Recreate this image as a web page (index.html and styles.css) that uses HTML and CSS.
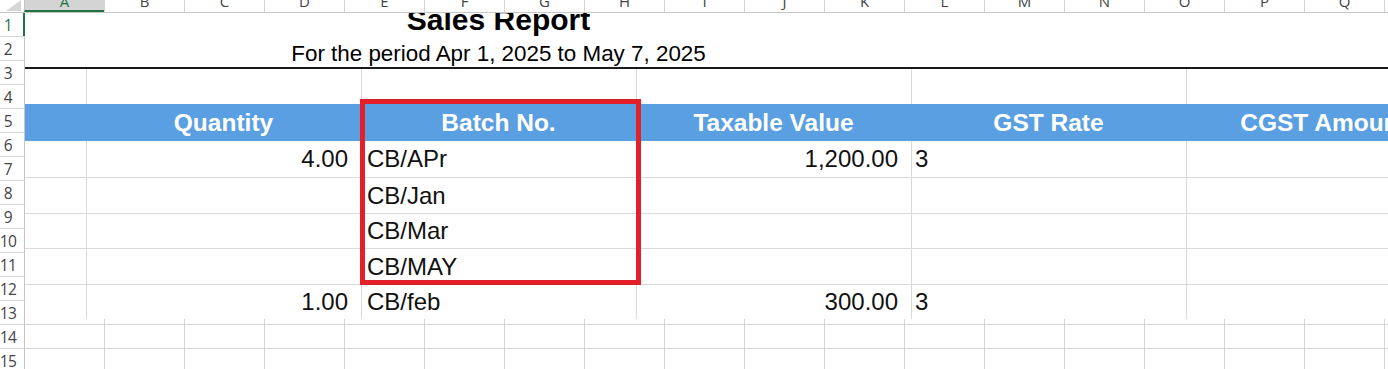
FILE: index.html
```html
<!DOCTYPE html>
<html>
<head>
<meta charset="utf-8">
<link rel="stylesheet" href="styles.css">
</head>
<body>
<div class="sheet">
  <div class="colhead">
    <div class="corner"><svg width="24" height="12" viewBox="0 0 24 12"><polygon points="6,11 21,11 21,0" fill="#d6d6d6"/></svg></div>
    <div class="col sel"><span>A</span></div>
    <div class="col"><span>B</span></div>
    <div class="col"><span>C</span></div>
    <div class="col"><span>D</span></div>
    <div class="col"><span>E</span></div>
    <div class="col"><span>F</span></div>
    <div class="col"><span>G</span></div>
    <div class="col"><span>H</span></div>
    <div class="col"><span>I</span></div>
    <div class="col"><span>J</span></div>
    <div class="col"><span>K</span></div>
    <div class="col"><span>L</span></div>
    <div class="col"><span>M</span></div>
    <div class="col"><span>N</span></div>
    <div class="col"><span>O</span></div>
    <div class="col"><span>P</span></div>
    <div class="col"><span>Q</span></div>
    <div class="col"><span>R</span></div>
  </div>
  <div class="body">
    <div class="rowhead">
      <div class="rn sel">1</div>
      <div class="rn">2</div>
      <div class="rn">3</div>
      <div class="rn">4</div>
      <div class="rn">5</div>
      <div class="rn">6</div>
      <div class="rn">7</div>
      <div class="rn">8</div>
      <div class="rn">9</div>
      <div class="rn">10</div>
      <div class="rn">11</div>
      <div class="rn">12</div>
      <div class="rn">13</div>
      <div class="rn">14</div>
      <div class="rn">15</div>
    </div>
    <div class="main">
      <div class="report">
        <div class="titles">
          <div class="tbox">
            <div class="title">Sales Report</div>
            <div class="subtitle">For the period Apr 1, 2025 to May 7, 2025</div>
          </div>
        </div>
        <div class="row gap">
          <div></div><div></div><div></div><div></div><div></div><div></div>
        </div>
        <div class="row band">
          <div></div>
          <div class="h">Quantity</div>
          <div class="h">Batch No.</div>
          <div class="h">Taxable Value</div>
          <div class="h">GST Rate</div>
          <div class="h">CGST Amount</div>
        </div>
        <div class="row data first">
          <div></div>
          <div class="num">4.00</div>
          <div class="txt">CB/APr</div>
          <div class="num">1,200.00</div>
          <div class="txt rate">3</div>
          <div></div>
        </div>
        <div class="row data">
          <div></div>
          <div class="num"></div>
          <div class="txt">CB/Jan</div>
          <div class="num"></div>
          <div class="txt rate"></div>
          <div></div>
        </div>
        <div class="row data short">
          <div></div>
          <div class="num"></div>
          <div class="txt">CB/Mar</div>
          <div class="num"></div>
          <div class="txt rate"></div>
          <div></div>
        </div>
        <div class="row data">
          <div></div>
          <div class="num"></div>
          <div class="txt">CB/MAY</div>
          <div class="num"></div>
          <div class="txt rate"></div>
          <div></div>
        </div>
        <div class="row data short">
          <div></div>
          <div class="num">1.00</div>
          <div class="txt">CB/feb</div>
          <div class="num">300.00</div>
          <div class="txt rate">3</div>
          <div></div>
        </div>
        <div class="redbox"></div>
      </div>
      <div class="grid">
        <div class="gstrip">
          <div class="gc"></div><div class="gc"></div><div class="gc"></div><div class="gc"></div><div class="gc"></div><div class="gc"></div><div class="gc"></div><div class="gc"></div><div class="gc"></div><div class="gc"></div><div class="gc"></div><div class="gc"></div><div class="gc"></div><div class="gc"></div><div class="gc"></div><div class="gc"></div><div class="gc"></div><div class="gc"></div>
        </div>
        <div class="grow">
          <div class="gc"></div><div class="gc"></div><div class="gc"></div><div class="gc"></div><div class="gc"></div><div class="gc"></div><div class="gc"></div><div class="gc"></div><div class="gc"></div><div class="gc"></div><div class="gc"></div><div class="gc"></div><div class="gc"></div><div class="gc"></div><div class="gc"></div><div class="gc"></div><div class="gc"></div><div class="gc"></div>
        </div>
        <div class="grow">
          <div class="gc"></div><div class="gc"></div><div class="gc"></div><div class="gc"></div><div class="gc"></div><div class="gc"></div><div class="gc"></div><div class="gc"></div><div class="gc"></div><div class="gc"></div><div class="gc"></div><div class="gc"></div><div class="gc"></div><div class="gc"></div><div class="gc"></div><div class="gc"></div><div class="gc"></div><div class="gc"></div>
        </div>
      </div>
    </div>
  </div>
</div>
</body>
</html>
```
FILE: styles.css
```css
* { box-sizing: border-box; margin: 0; padding: 0; }
html, body { width: 1388px; height: 369px; overflow: hidden; background: #fff; }
body { font-family: "Liberation Sans", Arial, sans-serif; color: #111; }

.sheet { width: 1388px; height: 369px; overflow: hidden; display: flex; flex-direction: column; }

/* column header */
.colhead { display: flex; flex: none; height: 13px; border-bottom: 1px solid #c6c6c6; background: #fff; }
.corner { width: 24px; flex: none; height: 12px; }
.corner svg { display: block; }
.col { width: 80px; flex: none; height: 12px; border-left: 1px solid #d4d4d4; overflow: hidden; text-align: center; font-family: "Open Sans", "Noto Sans", sans-serif; font-size: 15px; color: #444; }
.col span { display: block; line-height: 14px; margin-top: -6px; }
.col.sel { background: #d4d4d4; color: #217346; border-left-color: #c6c6c6; border-bottom: 2px solid #217346; }

.body { display: flex; flex: 1; min-height: 0; }

/* row header */
.rowhead { width: 25px; flex: none; display: flex; flex-direction: column; }
.rn { height: 24px; flex: none; border-top: 1px solid #d4d4d4; border-right: 1px solid #c6c6c6; display: flex; align-items: center; justify-content: center; padding-right: 8px; font-family: "Open Sans", "Noto Sans", sans-serif; font-size: 15.5px; letter-spacing: -0.6px; color: #444; white-space: nowrap; }
.rn:first-child { height: 23px; border-top: none; }
.rn.sel { color: #217346; border-right: 2px solid #217346; padding-right: 7px; }

.main { flex: 1; min-width: 0; overflow: hidden; display: flex; flex-direction: column; }

/* report */
.report { position: relative; flex: none; }
.titles { height: 56px; border-bottom: 2px solid #1a1a1a; display: grid; grid-template-columns: 61px 825px; overflow: hidden; }
.tbox { grid-column: 2; text-align: center; white-space: nowrap; }
.title { font-weight: bold; font-size: 30px; line-height: 13px; color: #000; }
.subtitle { font-size: 22.4px; line-height: 24px; margin-top: 16px; color: #000; }

.row { display: grid; grid-template-columns: 61px repeat(5, 275px); }
.gap { height: 35px; }
.gap > div + div, .data > div + div { border-left: 1px solid #d9d9d9; }

.band { height: 37px; background: #5b9fe3; }
.band .h { display: flex; align-items: center; justify-content: center; white-space: nowrap; color: #fff; font-weight: bold; font-size: 24.5px; }

.data { height: 36px; border-top: 1px solid #d9d9d9; }
.data.first { border-top: none; }
.data.short { height: 35px; }
.data > div { display: flex; align-items: center; font-size: 24px; color: #111; white-space: nowrap; }
.data .num { justify-content: flex-end; padding-right: 13px; }
.data .txt { padding-left: 5px; }
.data .rate { padding-left: 3px; }

.redbox { position: absolute; left: 335px; top: 86px; width: 281px; height: 186px; border: 5px solid #e3202a; }

/* bottom grid */
.grid { flex: 1; display: flex; flex-direction: column; }
.gstrip { height: 5px; display: flex; flex: none; }
.grow { height: 24px; display: flex; flex: none; border-top: 1px solid #d4d4d4; }
.gc { width: 80px; flex: none; border-left: 1px solid #d4d4d4; }
.gc:first-child { width: 79px; border-left: none; }
```
